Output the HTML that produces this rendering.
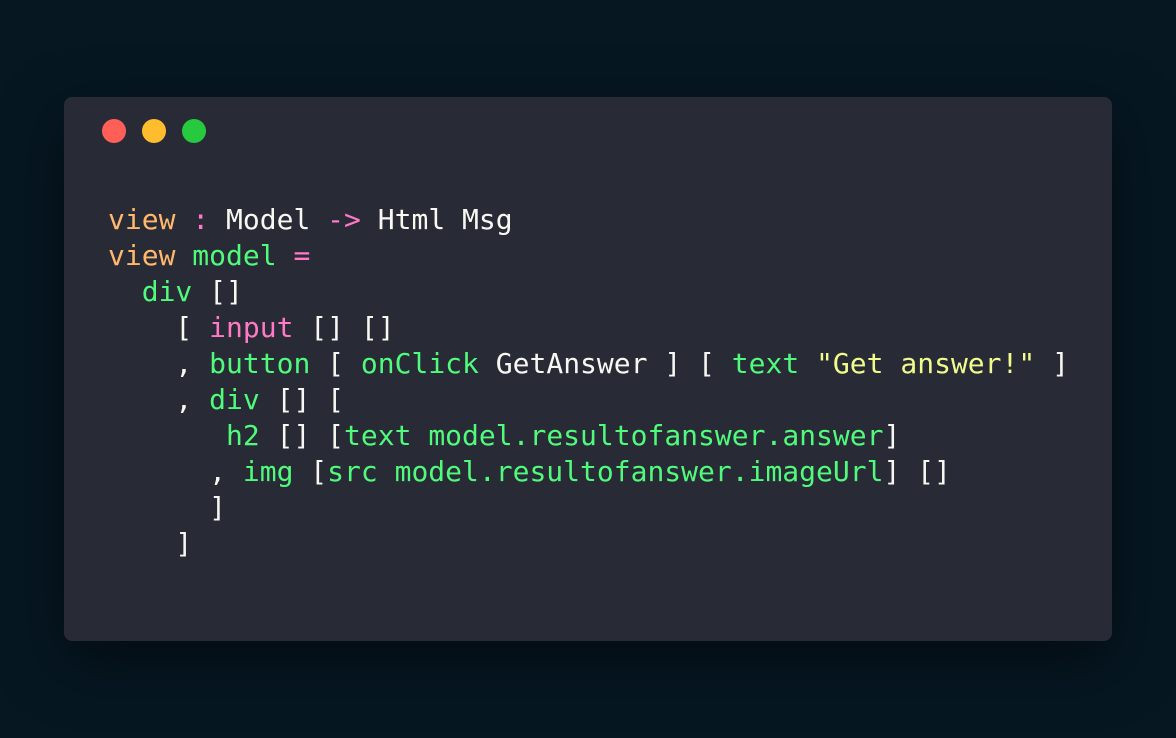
<!DOCTYPE html>
<html><head><style>
html,body{margin:0;padding:0;width:1176px;height:738px;background:#061722;overflow:hidden}
.win{position:absolute;left:64px;top:97px;width:1048px;height:544px;background:#282a36;border-radius:8px;box-shadow:0 20px 60px rgba(0,0,0,.5)}
.dot{position:absolute;top:22px;width:24px;height:24px;border-radius:50%}
pre{position:absolute;left:44px;top:105px;margin:0;font-family:"DejaVu Sans Mono","Liberation Mono",monospace;font-size:28px;line-height:36px;color:#f8f8f2}
.o{color:#ffb86c}.p{color:#ff79c6}.g{color:#50fa7b}.y{color:#f1fa8c}
</style></head><body>
<div class="win">
<div class="dot" style="left:38px;background:#ff5f56"></div>
<div class="dot" style="left:78px;background:#ffbd2e"></div>
<div class="dot" style="left:118px;background:#27c93f"></div>
<pre><span class="o">view</span> <span class="p">:</span> Model <span class="p">-&gt;</span> Html Msg
<span class="o">view</span> <span class="g">model</span> <span class="p">=</span>
  <span class="g">div</span> []
    [ <span class="p">input</span> [] []
    , <span class="g">button</span> [ <span class="g">onClick</span> GetAnswer ] [ <span class="g">text</span> <span class="y">"Get answer!"</span> ]
    , <span class="g">div</span> [] [
       <span class="g">h2</span> [] [<span class="g">text model.resultofanswer.answer</span>]
      , <span class="g">img</span> [<span class="g">src model.resultofanswer.imageUrl</span>] []
      ]
    ]</pre>
</div>
</body></html>
